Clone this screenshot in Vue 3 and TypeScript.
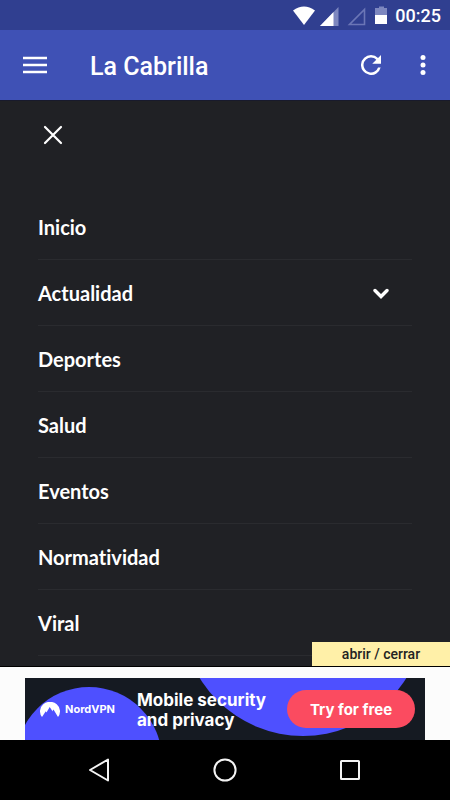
<script setup lang="ts">
import { ref } from 'vue'

interface MenuItem {
  label: string
  expandable?: boolean
}

const items: MenuItem[] = [
  { label: 'Inicio' },
  { label: 'Actualidad', expandable: true },
  { label: 'Deportes' },
  { label: 'Salud' },
  { label: 'Eventos' },
  { label: 'Normatividad' },
  { label: 'Viral' },
]

const menuOpen = ref(true)
const toggleMenu = () => {
  menuOpen.value = !menuOpen.value
}
</script>

<template>
  <div class="screen">
    <div class="status">
      <svg class="status-icons" width="98" height="20" viewBox="0 0 98 20" aria-hidden="true">
        <path d="M0 4.500Q11 -3.500 22 4.500L11 19Z" fill="#fff" />
        <path d="M45.500 1V20H27Z" fill="#7d87bf" />
        <path d="M40.500 6V20H27Z" fill="#fff" />
        <path d="M71.500 3.500V18.500H56.500Z" fill="none" stroke="#6b76b6" stroke-width="1.600" />
        <path d="M82 2H86V0.500H91V2H94V9H82Z" fill="#7d87bf" />
        <path d="M82 9H94V18H82Z" fill="#fff" />
      </svg>
      <span class="clock">00:25</span>
    </div>

    <header class="appbar">
      <button class="icon-button" type="button" aria-label="Menú" @click="toggleMenu">
        <svg width="24" height="18" viewBox="0 0 24 18"><path d="M0 2H24M0 9H24M0 16H24" stroke="#fff" stroke-width="2.400" /></svg>
      </button>
      <h1 class="title">La Cabrilla</h1>
      <button class="icon-button" type="button" aria-label="Actualizar">
        <svg width="20" height="20" viewBox="4 4 16 16"><path fill="#fff" d="M17.650 6.350A7.960 7.960 0 0 0 12 4a8 8 0 1 0 7.730 10h-2.080A6 6 0 1 1 12 6c1.660 0 3.140.690 4.220 1.780L13 11h7V4z" /></svg>
      </button>
      <button class="icon-button more" type="button" aria-label="Más opciones">
        <svg width="6" height="20" viewBox="0 0 6 20" fill="#fff"><circle cx="3" cy="2.500" r="2.500" /><circle cx="3" cy="10" r="2.500" /><circle cx="3" cy="17.500" r="2.500" /></svg>
      </button>
    </header>

    <main class="drawer">
      <button class="close" type="button" aria-label="Cerrar" @click="toggleMenu">
        <svg width="20" height="20" viewBox="0 0 20 20"><path d="M2 2L18 18M18 2L2 18" stroke="#fff" stroke-width="2.200" stroke-linecap="round" /></svg>
      </button>
      <nav v-show="menuOpen">
        <ul class="menu">
          <li v-for="item in items" :key="item.label" class="item">
            <a class="link" href="#">{{ item.label }}</a>
            <button v-if="item.expandable" class="expand" type="button" aria-label="Desplegar">
              <svg width="16" height="12" viewBox="0 0 16 12"><path d="M2 3.500L8 9.500L14 3.500" fill="none" stroke="#fff" stroke-width="3.400" stroke-linecap="round" /></svg>
            </button>
          </li>
        </ul>
      </nav>
      <button class="toggle" type="button" @click="toggleMenu">abrir / cerrar</button>
    </main>

    <aside class="ad">
      <div class="banner">
        <svg class="shapes" width="400" height="62" viewBox="0 0 400 62" aria-hidden="true">
          <circle cx="64" cy="82" r="73" fill="#4e50ff" />
          <circle cx="278" cy="-63" r="121" fill="#4e50ff" />
        </svg>
        <div class="brand">
          <svg width="20" height="15" viewBox="0 0 20 15"><path fill="#fff" d="M2 15A10 9.500 0 1 1 18 15L13.500 7.500L12.500 9L13 10L9.700 5L6.500 10.500L5.800 9.200Z" /></svg>
          <span>NordVPN</span>
        </div>
        <p class="headline">Mobile security<br />and privacy</p>
        <button class="cta" type="button">Try for free</button>
      </div>
    </aside>

    <footer class="navbar">
      <button class="nav-button" type="button" aria-label="Atrás">
        <svg width="24" height="24" viewBox="0 0 24 24"><path d="M20 1.500V22.500L2 12Z" /></svg>
      </button>
      <button class="nav-button" type="button" aria-label="Inicio">
        <svg width="24" height="24" viewBox="0 0 24 24"><circle cx="12" cy="12" r="10.600" /></svg>
      </button>
      <button class="nav-button" type="button" aria-label="Recientes">
        <svg width="24" height="24" viewBox="0 0 24 24"><rect x="3" y="3" width="18" height="18" rx="0.500" /></svg>
      </button>
    </footer>
  </div>
</template>

<style>
body {
  margin: 0;
  background: #202125;
}
</style>

<style scoped>
.screen {
  display: flex;
  flex-direction: column;
  height: 100vh;
  overflow: hidden;
  font-family: Roboto, sans-serif;
  color: #fff;
}

button {
  margin: 0;
  padding: 0;
  border: 0;
  background: none;
  color: inherit;
  font: inherit;
  cursor: pointer;
}

svg {
  display: block;
}

.status {
  display: flex;
  align-items: center;
  justify-content: flex-end;
  gap: 4px;
  height: 30px;
  padding-right: 9px;
  background: #303f90;
}

.clock {
  font-size: 18px;
  font-weight: 500;
  line-height: 30px;
  padding-top: 2px;
}

.status-icons {
  margin-top: 2px;
}

.appbar {
  display: flex;
  align-items: center;
  height: 70px;
  padding: 0 18px 0 12px;
  background: #3f51b5;
}

.icon-button {
  display: flex;
  align-items: center;
  justify-content: center;
  width: 46px;
  height: 46px;
}

.more {
  width: 18px;
  margin-left: 20px;
}

.title {
  flex: 1;
  margin: 0;
  padding: 4px 0 0 32px;
  font-size: 25px;
  font-weight: 500;
  line-height: 32px;
}

.drawer {
  position: relative;
  flex: 1;
  min-height: 0;
  overflow: hidden;
  padding: 0 38px;
  box-sizing: border-box;
  background: #202125;
  border-top: 1px solid #181a2c;
  border-bottom: 1px solid #000;
}

.close {
  display: block;
  margin: 24px 0 49px 5px;
}

.menu {
  margin: 0;
  padding: 0;
  list-style: none;
}

.item {
  display: flex;
  align-items: center;
  height: 65px;
  border-bottom: 1px solid #2a2b2f;
}

.link {
  flex: 1;
  color: #fff;
  font-family: Lato, sans-serif;
  font-size: 20px;
  font-weight: 700;
  font-variant-ligatures: none;
  line-height: 24px;
  text-decoration: none;
}

.expand {
  padding: 8px 23px;
}

.toggle {
  position: absolute;
  right: 0;
  bottom: 0;
  width: 138px;
  height: 24px;
  background: #fff0a8;
  color: #222;
  font-size: 14px;
  font-weight: 500;
}

.ad {
  display: flex;
  justify-content: center;
  padding-top: 11px;
  background: #fcfcfc;
}

.banner {
  position: relative;
  display: flex;
  align-items: center;
  width: 400px;
  height: 62px;
  background: #151a22;
  font-family: Inter, sans-serif;
}

.shapes {
  position: absolute;
  inset: 0;
}

.brand,
.headline,
.cta {
  position: relative;
}

.brand {
  display: flex;
  align-items: center;
  gap: 5px;
  width: 97px;
  padding-left: 15px;
  font-size: 11px;
  font-weight: 700;
}

.headline {
  flex: 1;
  margin: 0;
  padding-top: 2px;
  font-size: 17px;
  font-weight: 700;
  line-height: 20px;
  white-space: nowrap;
}

.cta {
  width: 128px;
  height: 38px;
  margin-right: 10px;
  border-radius: 19px;
  background: #fb4b60;
  font-size: 15px;
  font-weight: 700;
}

.navbar {
  display: flex;
  align-items: center;
  justify-content: center;
  gap: 101px;
  height: 60px;
  background: #000;
}

.nav-button svg {
  fill: none;
  stroke: #f4f4f4;
  stroke-width: 2;
  stroke-linejoin: round;
}
</style>
